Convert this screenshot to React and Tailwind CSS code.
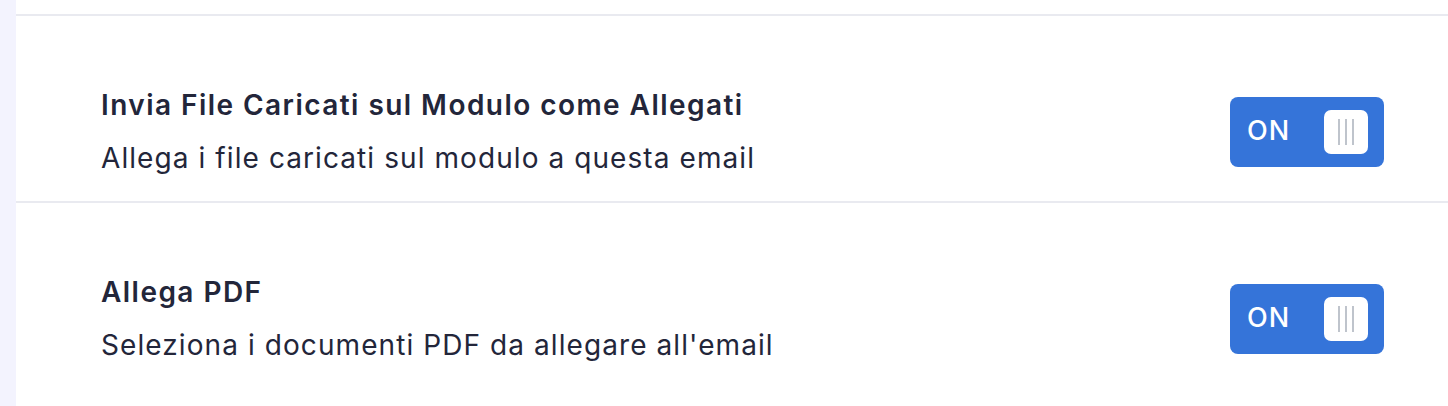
import React, { useState } from "react";

const Toggle = ({ on, onClick }) => {
  return (
    <button
      type="button"
      onClick={onClick}
      className="flex items-center justify-between w-[154px] h-[70px] rounded-[8px] bg-[#3574d9] pl-[17px] pr-[16px] shrink-0"
    >
      <span className="text-white text-[27px] font-medium tracking-[1px]">{on ? "ON" : "OFF"}</span>
      <span className="flex items-center justify-center gap-[5px] w-[44px] h-[44px] rounded-[7px] bg-white">
        <span className="w-[2px] h-[26px] bg-[#bfc4cc]" />
        <span className="w-[2px] h-[26px] bg-[#bfc4cc]" />
        <span className="w-[2px] h-[26px] bg-[#bfc4cc]" />
      </span>
    </button>
  );
};

const SettingRow = ({ title, desc }) => {
  const [on, setOn] = useState(true);
  return (
    <div className="flex items-center justify-between border-t-2 border-[#e9eaf0] pt-[72px] pb-[26px] pl-[85px] pr-[64px]">
      <div className="flex flex-col">
        <h3 className="text-[28px] leading-[34px] font-semibold tracking-[1.45px] text-[#23263a]">{title}</h3>
        <p className="mt-[19px] text-[28px] leading-[34px] tracking-[1.08px] text-[#23263a]">{desc}</p>
      </div>
      <Toggle on={on} onClick={() => setOn(!on)} />
    </div>
  );
};

const App = () => {
  return (
    <div className="min-h-screen flex bg-white" style={{ fontFamily: "Inter, 'Noto Sans', sans-serif" }}>
      <div className="w-[16px] bg-[#f3f3fe] shrink-0" />
      <div className="flex-1 pt-[14px]">
        <SettingRow
          title="Invia File Caricati sul Modulo come Allegati"
          desc="Allega i file caricati sul modulo a questa email"
        />
        <SettingRow
          title="Allega PDF"
          desc="Seleziona i documenti PDF da allegare all'email"
        />
      </div>
    </div>
  );
};

export default App;
